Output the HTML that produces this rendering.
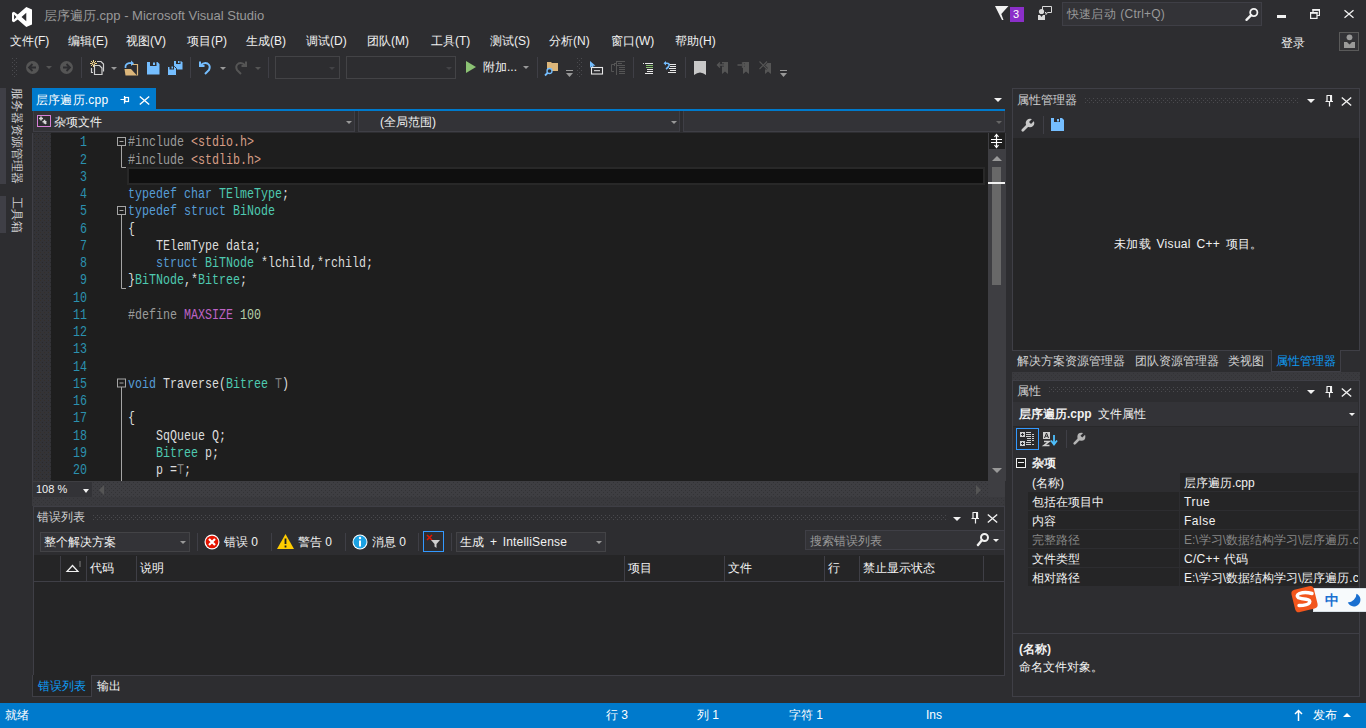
<!DOCTYPE html>
<html><head><meta charset="utf-8">
<style>
*{margin:0;padding:0;box-sizing:border-box}
html,body{width:1366px;height:728px;overflow:hidden;background:#2d2d30;font-family:"Liberation Sans",sans-serif;font-size:12px;color:#f1f1f1}
.a{position:absolute}
.t{position:absolute;white-space:nowrap;line-height:1}
svg{position:absolute;overflow:visible}
.dots{background-image:radial-gradient(circle,#46464c 0.7px,transparent 0.9px);background-size:4px 4px}
.code{position:absolute;left:128px;font-family:"Liberation Mono",monospace;font-size:14px;transform-origin:0 0;transform:scaleX(0.8333);white-space:pre;line-height:17.25px;color:#dcdcdc}
.ln{position:absolute;left:37px;width:50px;text-align:right;font-family:"Liberation Mono",monospace;font-size:14px;transform-origin:100% 0;transform:scaleX(0.8333);white-space:pre;line-height:17.25px;color:#2b91af}
.kw{color:#569cd6}.ty{color:#4ec9b0}.pp{color:#9b9b9b}.st{color:#d69d85}.mc{color:#bd63c5}.nu{color:#b5cea8}.gr{color:#7f7f7f}
.sep{position:absolute;width:1px;background:#3f3f46}
.arr{position:absolute;width:0;height:0;border-left:3px solid transparent;border-right:3px solid transparent;border-top:3px solid #999}
</style></head><body>
<svg style="left:0;top:0" width="0" height="0"><defs>
<pattern id="pd" width="4" height="4" patternUnits="userSpaceOnUse"><rect x="0" y="0" width="1" height="1" fill="#4a4a4e"/><rect x="2" y="2" width="1" height="1" fill="#4a4a4e"/></pattern>
<pattern id="pk" width="4" height="4" patternUnits="userSpaceOnUse"><rect x="1" y="1" width="1" height="1" fill="#29292b"/><rect x="3" y="3" width="1" height="1" fill="#352f2a"/></pattern>
<pattern id="ph" width="4" height="4" patternUnits="userSpaceOnUse"><rect x="1" y="1" width="1" height="1" fill="#333336"/><rect x="3" y="3" width="1" height="1" fill="#333336"/></pattern>
</defs></svg>
<!-- ===== TITLE BAR ===== -->
<svg style="left:12px;top:7px" width="20" height="20" viewBox="0 0 21 21"><path d="M15 0 L21 2.6 V18.4 L15 21 L6 13 L2 16 L0 15 V6 L2 5 L6 8 Z M15 6 L10 10.5 L15 15 Z M2.2 8 V13 L4.6 10.5 Z" fill="#fff" fill-rule="evenodd"/></svg>
<div class="t" style="left:44px;top:9px;font-size:13px;color:#999">层序遍历.cpp - Microsoft Visual Studio</div>

<svg style="left:995px;top:6px" width="14" height="15" viewBox="0 0 14 15"><path d="M0 0 H13.5 L6.3 8 L8.5 14 H7 Z" fill="#f1f1f1"/></svg>
<div class="a" style="left:1010px;top:7px;width:14px;height:15px;background:#8b2fc9"></div>
<div class="t" style="left:1013px;top:9px;font-size:11px;color:#fff">3</div>
<svg style="left:1037px;top:5px" width="16" height="16" viewBox="0 0 16 16"><path d="M5.5 6 V1.5 H14.5 V7.5 H10.5 L9 9.5 V7.5 H8" fill="none" stroke="#dadada" stroke-width="1"/><circle cx="4.5" cy="6.5" r="2.6" fill="#dadada"/><path d="M1 15 V10 H3 L4.5 12 L6 10 H8 V15 Z" fill="#dadada"/></svg>
<div class="a" style="left:1062px;top:2px;width:200px;height:24px;background:#333337;border:1px solid #3f3f46"></div>
<div class="t" style="left:1067px;top:8px;color:#999;letter-spacing:0.2px;word-spacing:1px">快速启动 (Ctrl+Q)</div>
<svg style="left:1245px;top:7px" width="14" height="14" viewBox="0 0 14 14"><circle cx="8.8" cy="5.5" r="3.6" fill="none" stroke="#f1f1f1" stroke-width="1.8"/><path d="M6.2 8.2 L1.5 12.8" stroke="#f1f1f1" stroke-width="2.4" stroke-linecap="round"/></svg>
<div class="a" style="left:1277px;top:15px;width:9px;height:3px;background:#f1f1f1"></div>
<svg style="left:1310px;top:9px" width="10" height="10" viewBox="0 0 10 10"><path d="M3 3 V0.6 H9.4 V6.5 H7" fill="none" stroke="#f1f1f1" stroke-width="1.2"/><rect x="0.6" y="3.6" width="6.4" height="5.8" fill="none" stroke="#f1f1f1" stroke-width="1.2"/><rect x="0" y="3" width="7.6" height="1.8" fill="#f1f1f1"/><rect x="2.4" y="0" width="7.6" height="1.8" fill="#f1f1f1"/></svg>
<svg style="left:1344px;top:10px" width="10" height="8" viewBox="0 0 10 8"><path d="M0.5 0.3 L9.5 7.7 M9.5 0.3 L0.5 7.7" stroke="#f1f1f1" stroke-width="1.3"/></svg>

<!-- ===== MENU ===== -->
<div class="t" style="left:10px;top:35px">文件(F)</div>
<div class="t" style="left:68px;top:35px">编辑(E)</div>
<div class="t" style="left:126px;top:35px">视图(V)</div>
<div class="t" style="left:187px;top:35px">项目(P)</div>
<div class="t" style="left:246px;top:35px">生成(B)</div>
<div class="t" style="left:306px;top:35px">调试(D)</div>
<div class="t" style="left:367px;top:35px">团队(M)</div>
<div class="t" style="left:431px;top:35px">工具(T)</div>
<div class="t" style="left:490px;top:35px">测试(S)</div>
<div class="t" style="left:549px;top:35px">分析(N)</div>
<div class="t" style="left:611px;top:35px">窗口(W)</div>
<div class="t" style="left:675px;top:35px">帮助(H)</div>
<div class="t" style="left:1281px;top:37px">登录</div>
<div class="a" style="left:1339px;top:32px;width:20px;height:19px;border:1px solid #5a5a5a;background:#333337"></div>
<svg style="left:1344px;top:34px" width="11" height="14" viewBox="0 0 11 14"><circle cx="5.5" cy="3.3" r="2.9" fill="#9a9a9a"/><path d="M0 14 V8 H3 L5.5 10.5 L8 8 H11 V14 Z" fill="#9a9a9a"/></svg>

<!-- ===== TOOLBAR ===== -->
<svg style="left:12px;top:58px" width="5" height="20"><rect width="5" height="20" fill="url(#pd)"/></svg>
<svg style="left:26px;top:61px" width="13" height="13" viewBox="0 0 13 13"><circle cx="6.5" cy="6.5" r="6.5" fill="#555"/><path d="M3 6.5 H10 M6.5 3 L3 6.5 L6.5 10" fill="none" stroke="#2d2d30" stroke-width="1.8"/></svg>
<div class="arr" style="left:46px;top:66px;border-top-color:#555"></div>
<svg style="left:60px;top:61px" width="13" height="13" viewBox="0 0 13 13"><circle cx="6.5" cy="6.5" r="6.5" fill="#555"/><path d="M3 6.5 H10 M6.5 3 L10 6.5 L6.5 10" fill="none" stroke="#2d2d30" stroke-width="1.8"/></svg>
<div class="sep" style="left:81px;top:57px;height:21px"></div>
<svg style="left:90px;top:60px" width="14" height="15" viewBox="0 0 14 15"><g stroke="#f5d78e" stroke-width="1"><path d="M3.5 0 V7 M0 3.5 H7 M1 1 L6 6 M6 1 L1 6"/></g><circle cx="3.5" cy="3.5" r="1" fill="#2d2d30"/><path d="M7 1.5 H11 L13.5 4 V11.5" fill="none" stroke="#d0d0d0" stroke-width="1.2"/><path d="M1.5 8 V12.5 H3" fill="none" stroke="#d0d0d0" stroke-width="1.2"/><path d="M4.5 5.5 H9.5 L12 8 V14.5 H4.5 Z" fill="#2d2d30" stroke="#d0d0d0" stroke-width="1.2"/></svg>
<div class="arr" style="left:111px;top:67px;border-top-color:#999"></div>
<svg style="left:124px;top:60px" width="15" height="16" viewBox="0 0 15 16"><path d="M7 4.5 H13.5 V15.5" fill="none" stroke="#dcb67a" stroke-width="1.2"/><path d="M0.5 9 H7 L13 15.5 H1.5 Z" fill="#dcb67a"/><path d="M1.5 8 Q1 4 5 3.2 H8" fill="none" stroke="#75beff" stroke-width="1.7"/><path d="M7 0.5 L10 3.2 L7 6 Z" fill="#75beff"/></svg>
<svg style="left:147px;top:62px" width="13" height="13" viewBox="0 0 13 13"><path d="M0 0 H10.5 L12.5 2 V12.5 H0 Z" fill="#75beff"/><rect x="3" y="0" width="6.5" height="4" fill="#2d2d30"/><rect x="6" y="0.5" width="2" height="2.5" fill="#75beff"/></svg>
<svg style="left:167px;top:60px" width="16" height="16" viewBox="0 0 16 16"><path d="M7 1 H14 L15.5 2.5 V9.5 H7 Z" fill="#75beff"/><rect x="9" y="1" width="4.5" height="3" fill="#2d2d30"/><rect x="11" y="1" width="1.5" height="2" fill="#75beff"/><path d="M0.5 6.5 H7.5 L9.5 8.5 V15.5 H0.5 Z" fill="#75beff" stroke="#2d2d30" stroke-width="1"/><rect x="2.5" y="6.5" width="4.5" height="3" fill="#2d2d30"/><rect x="4.5" y="6.5" width="1.5" height="2" fill="#75beff"/></svg>
<div class="sep" style="left:190px;top:57px;height:21px"></div>
<svg style="left:198px;top:60px" width="14" height="15" viewBox="0 0 14 15"><path d="M2 1.5 V6 H6.5" fill="none" stroke="#75beff" stroke-width="2"/><path d="M2.5 5.5 Q6 2 9.5 3.5 Q13 5.5 11 10 L7 14" fill="none" stroke="#75beff" stroke-width="2"/></svg>
<div class="arr" style="left:220px;top:67px;border-top-color:#999"></div>
<svg style="left:234px;top:60px" width="14" height="15" viewBox="0 0 14 15"><path d="M12 1.5 V6 H7.5" fill="none" stroke="#555" stroke-width="2"/><path d="M11.5 5.5 Q8 2 4.5 3.5 Q1 5.5 3 10 L7 14" fill="none" stroke="#555" stroke-width="2"/></svg>
<div class="arr" style="left:255px;top:67px;border-top-color:#555"></div>
<div class="sep" style="left:268px;top:57px;height:21px"></div>
<div class="a" style="left:275px;top:56px;width:65px;height:23px;border:1px solid #434346"></div>
<div class="arr" style="left:329px;top:67px;border-top-color:#434346"></div>
<div class="a" style="left:346px;top:56px;width:110px;height:23px;border:1px solid #434346"></div>
<div class="arr" style="left:446px;top:67px;border-top-color:#434346"></div>
<svg style="left:466px;top:61px" width="10" height="12" viewBox="0 0 10 12"><path d="M0 0 L10 6 L0 12 Z" fill="#8cc274"/></svg>
<div class="t" style="left:483px;top:61px">附加...</div>
<div class="arr" style="left:523px;top:66px;border-top-color:#999"></div>
<div class="sep" style="left:537px;top:57px;height:21px"></div>
<svg style="left:544px;top:60px" width="15" height="16" viewBox="0 0 15 16"><path d="M3 2 H7 L8 3 H14 V11 H3 Z" fill="#dcb67a"/><circle cx="5.5" cy="11" r="2.5" fill="#2d2d30" stroke="#75beff" stroke-width="1.3"/><path d="M4 12.5 L1 15.5" stroke="#75beff" stroke-width="1.8"/></svg>
<svg style="left:566px;top:70px" width="7" height="7" viewBox="0 0 7 7"><rect x="0" y="0" width="7" height="1" fill="#999"/><path d="M0 3 H7 L3.5 7 Z" fill="#999"/></svg>
<svg style="left:577px;top:58px" width="5" height="20"><rect width="5" height="20" fill="url(#pd)"/></svg>
<svg style="left:590px;top:61px" width="14" height="14" viewBox="0 0 14 14"><path d="M0 0 V7 L1.8 5.3 L3.2 8 L4.2 7.5 L3 4.8 L5.5 4.8 Z" fill="#75beff"/><rect x="1.5" y="6.5" width="11" height="6.5" fill="#2d2d30" stroke="#e8e8e8" stroke-width="1.1"/><path d="M4 9.7 H10" stroke="#e8e8e8" stroke-width="1"/></svg>
<svg style="left:611px;top:61px" width="15" height="15" viewBox="0 0 15 15"><g stroke="#555" stroke-width="1" fill="none"><path d="M5.5 0 V14 M6 0.5 H14 M7 2.5 H11 M6 4.5 H14 M8 6.5 H14 M8 8.5 H14 M8 10.5 H14 M8 12.5 H14 M3.5 2.5 H5 M3.5 2 V5"/><path d="M3 3.5 H0.5 V10.5 H3"/></g></svg>
<div class="sep" style="left:633px;top:57px;height:21px"></div>
<svg style="left:643px;top:62px" width="11" height="12" viewBox="0 0 11 12"><path d="M0 1.5 H1 M2 1.5 H10 M4 9.5 H10 M2 11.5 H10" stroke="#e8e8e8" stroke-width="1"/><path d="M3 3.5 H10 M3 5.5 H10" stroke="#8cc274" stroke-width="1"/><path d="M4 7.5 H10" stroke="#e8e8e8" stroke-width="1"/></svg>
<svg style="left:663px;top:61px" width="14" height="14" viewBox="0 0 14 14"><path d="M6 3.5 H13 M7 5.5 H13 M6 7.5 H13 M7 9.5 H13 M5 11.5 H13" stroke="#e8e8e8" stroke-width="1"/><path d="M2 2.2 H4 Q6.5 2.2 6 4.5 Q5.5 6.5 3 8" fill="none" stroke="#75beff" stroke-width="1.6"/><path d="M0.5 2.2 L3 0 V4.5 Z" fill="#75beff"/></svg>
<div class="sep" style="left:685px;top:57px;height:21px"></div>
<svg style="left:694px;top:61px" width="12" height="14" viewBox="0 0 12 14"><path d="M0 0 H12 V14 Q6 9 0 14 Z" fill="#c8c8c8"/></svg>
<svg style="left:716px;top:61px" width="13" height="13" viewBox="0 0 13 13"><path d="M6 1 H12 V13 L9 10.5 L6 13 Z" fill="#555"/><path d="M1.5 4 H8" stroke="#2d2d30" stroke-width="3"/><path d="M2 4 H8 M4 1.5 L1.5 4 L4 6.5" fill="none" stroke="#555" stroke-width="1.4"/></svg>
<svg style="left:737px;top:61px" width="13" height="13" viewBox="0 0 13 13"><path d="M6 1 H12 V13 L9 10.5 L6 13 Z" fill="#555"/><path d="M0 4 H8" stroke="#2d2d30" stroke-width="3"/><path d="M0.5 4 H7 M5 1.5 L7.5 4 L5 6.5" fill="none" stroke="#555" stroke-width="1.4"/></svg>
<svg style="left:759px;top:61px" width="13" height="13" viewBox="0 0 13 13"><path d="M6 2 H12 V13 L9 10.5 L6 13 Z" fill="#555"/><path d="M0.5 0.5 L8 8 M8 0.5 L0.5 8" fill="none" stroke="#2d2d30" stroke-width="2.6"/><path d="M0.5 0.5 L8 8 M8 0.5 L0.5 8" fill="none" stroke="#555" stroke-width="1.1"/></svg>
<svg style="left:780px;top:70px" width="7" height="7" viewBox="0 0 7 7"><rect x="0" y="0" width="7" height="1" fill="#999"/><path d="M0 3 H7 L3.5 7 Z" fill="#999"/></svg>
<!-- ===== LEFT VERTICAL TABS ===== -->
<div class="a" style="left:0;top:88px;width:6px;height:96px;background:#3f3f46"></div>
<div class="a" style="left:0;top:196px;width:6px;height:37px;background:#3f3f46"></div>
<div class="t" style="left:23px;top:88px;transform-origin:0 0;transform:rotate(90deg);color:#d0d0d0;letter-spacing:0">服务器资源管理器</div>
<div class="t" style="left:23px;top:197px;transform-origin:0 0;transform:rotate(90deg);color:#d0d0d0">工具箱</div>

<!-- ===== DOC TAB ===== -->
<div class="a" style="left:32px;top:88px;width:124px;height:21px;background:#007acc"></div>
<div class="t" style="left:36px;top:94px;color:#fff;letter-spacing:0.2px">层序遍历.cpp</div>
<svg style="left:120px;top:96px" width="10" height="8" viewBox="0 0 10 8"><path d="M0.5 3.5 H4 M4.5 0 V7.5" stroke="#fff" stroke-width="1.2"/><rect x="5" y="1.5" width="3.5" height="4" fill="none" stroke="#fff" stroke-width="1.2"/></svg>
<svg style="left:139px;top:96px" width="11" height="9" viewBox="0 0 11 9"><path d="M0.8 0.5 L10.2 8.5 M10.2 0.5 L0.8 8.5" stroke="#fff" stroke-width="1.4"/></svg>
<div class="a" style="left:32px;top:109px;width:973px;height:2px;background:#007acc"></div>
<div class="arr" style="left:994px;top:98px;border-left-width:4px;border-right-width:4px;border-top:4px solid #f1f1f1"></div>

<!-- ===== NAV BAR ===== -->
<div class="a" style="left:33px;top:111px;width:972px;height:22px;background:#2d2d30"></div>
<div class="a" style="left:33px;top:111px;width:322px;height:21px;background:#333337;border:1px solid #3f3f46;border-top:0"></div>
<svg style="left:37px;top:115px" width="14" height="12" viewBox="0 0 14 12"><rect x="0.5" y="0.5" width="13" height="11" fill="#2d2d30" stroke="#d67fd6" stroke-width="1"/><path d="M2 3.5 H6 M4 1.5 V5.5 M5.5 6.8 H9.5 M7.5 4.8 V8.8 M7 5.5 L9 9" stroke="#d8d8d8" stroke-width="1.6"/></svg>
<div class="t" style="left:54px;top:116px;color:#f1f1f1">杂项文件</div>
<div class="arr" style="left:346px;top:121px;border-top-color:#999"></div>
<div class="a" style="left:358px;top:111px;width:322px;height:21px;background:#333337;border:1px solid #3f3f46;border-top:0"></div>
<div class="t" style="left:380px;top:116px;color:#f1f1f1">(全局范围)</div>
<div class="arr" style="left:671px;top:121px;border-top-color:#999"></div>
<div class="a" style="left:683px;top:111px;width:322px;height:21px;background:#333337;border:1px solid #3f3f46;border-top:0"></div>
<div class="arr" style="left:996px;top:121px;border-top-color:#666"></div>

<!-- ===== EDITOR ===== -->
<div class="a" style="left:33px;top:133px;width:955px;height:348px;background:#1e1e1e"></div>
<div class="a" style="left:32px;top:133px;width:19px;height:348px;background:#333337;border-left:1px solid #3f3f46"></div><svg style="left:33px;top:133px" width="18" height="348"><rect width="18" height="348" fill="url(#pk)"/></svg>
<!-- current line -->
<div class="a" style="left:127px;top:167px;width:858px;height:18px;border:2px solid #282828;background:#0f0f0f"></div>
<!-- outlining -->
<svg style="left:116px;top:132px" width="12" height="349" viewBox="0 0 12 349">
<g fill="none" stroke="#a5a5a5" stroke-width="1">
<rect x="1.5" y="5.5" width="8" height="8"/><path d="M3.5 9.5 H7.5"/>
<path d="M5.5 13.5 V35.5 H10"/>
<rect x="1.5" y="74.5" width="8" height="8"/><path d="M3.5 78.5 H7.5"/>
<path d="M5.5 82.5 V156.5 H10"/>
<rect x="1.5" y="247" width="8" height="8"/><path d="M3.5 251 H7.5"/>
<path d="M5.5 255 V349"/>
</g></svg>
<div class="ln" style="top:134.4px">1
2
3
4
5
6
7
8
9
10
11
12
13
14
15
16
17
18
19
20</div>
<div class="code" style="top:134.4px"><span class="pp">#include </span><span class="st">&lt;stdio.h&gt;</span>
<span class="pp">#include </span><span class="st">&lt;stdlib.h&gt;</span>

<span class="kw">typedef</span> <span class="kw">char</span> <span class="ty">TElmeType</span>;
<span class="kw">typedef</span> <span class="kw">struct</span> <span class="ty">BiNode</span>
{
    TElemType data;
    <span class="kw">struct</span> <span class="ty">BiTNode</span> *lchild,*rchild;
}<span class="ty">BiTNode</span>,*<span class="ty">Bitree</span>;

<span class="pp">#define </span><span class="mc">MAXSIZE</span> <span class="nu">100</span>



<span class="kw">void</span> Traverse(<span class="ty">Bitree</span> <span class="gr">T</span>)

{
    SqQueue Q;
    <span class="ty">Bitree</span> p;
    p =<span class="gr">T</span>;</div>

<!-- vscroll -->
<div class="a" style="left:988px;top:133px;width:18px;height:348px;background:#3e3e42"></div>
<div class="a" style="left:989px;top:133px;width:16px;height:16px;background:#1e1e1e"></div>
<svg style="left:990px;top:134px" width="13" height="14" viewBox="0 0 13 14"><path d="M1 5.5 H12 M1 8.5 H12 M6.5 1 V13" stroke="#fff" stroke-width="1.2"/><path d="M4.5 3 L6.5 0.5 L8.5 3 M4.5 11 L6.5 13.5 L8.5 11" fill="none" stroke="#fff" stroke-width="1.2"/></svg>
<div class="arr" style="left:992px;top:156px;border-left:5px solid transparent;border-right:5px solid transparent;border-top:0;border-bottom:5px solid #999"></div>
<div class="a" style="left:992px;top:167px;width:9px;height:118px;background:#686868"></div>
<div class="a" style="left:988px;top:182px;width:17px;height:2px;background:#f1f1f1"></div>
<div class="arr" style="left:992px;top:468px;border-left:5px solid transparent;border-right:5px solid transparent;border-top:5px solid #999"></div>

<!-- hscroll / zoom -->
<div class="a" style="left:32px;top:481px;width:956px;height:16px;background:#3e3e42"></div><svg style="left:92px;top:481px" width="896" height="16"><rect width="896" height="16" fill="url(#ph)"/></svg>
<div class="a" style="left:988px;top:481px;width:17px;height:16px;background:#3e3e42"></div>
<div class="a" style="left:33px;top:482px;width:59px;height:15px;background:#333337"></div>
<div class="t" style="left:36px;top:484px;font-size:11px;color:#f1f1f1">108 %</div>
<div class="arr" style="left:83px;top:489px;border-left-width:3.5px;border-right-width:3.5px;border-top:4px solid #f1f1f1"></div>
<svg style="left:99px;top:485px" width="5" height="10" viewBox="0 0 5 10"><path d="M5 0 V10 L0 5 Z" fill="#555"/></svg>
<svg style="left:976px;top:485px" width="5" height="10" viewBox="0 0 5 10"><path d="M0 0 V10 L5 5 Z" fill="#555"/></svg>
<div class="a" style="left:32px;top:497px;width:973px;height:9px;background:#3a3a3e"></div><svg style="left:32px;top:497px" width="973" height="9"><rect width="973" height="9" fill="url(#ph)"/></svg>
<!-- ===== ERROR LIST ===== -->
<div class="a" style="left:33px;top:506px;width:972px;height:191px;background:#2d2d30;border:1px solid #3f3f46"></div>
<div class="t" style="left:37px;top:511px;color:#d0d0d0">错误列表</div>
<svg style="left:93px;top:515px" width="854" height="5"><rect width="854" height="5" fill="url(#pd)"/></svg>
<div class="arr" style="left:953px;top:517px;border-left-width:4px;border-right-width:4px;border-top:4px solid #f1f1f1"></div>
<svg style="left:971px;top:512px" width="9" height="12" viewBox="0 0 9 12"><path d="M1.5 0.5 H7 M2 0.5 V6.5 M6.5 0.5 V6.5 M0.5 6.5 H8 M4.5 6.5 V11.5" fill="none" stroke="#f1f1f1" stroke-width="1.2"/><rect x="5" y="0" width="2" height="6.5" fill="#f1f1f1"/></svg>
<svg style="left:987px;top:514px" width="11" height="9" viewBox="0 0 11 9"><path d="M0.8 0.5 L10.2 8.5 M10.2 0.5 L0.8 8.5" stroke="#f1f1f1" stroke-width="1.4"/></svg>
<!-- toolbar -->
<div class="a" style="left:40px;top:532px;width:150px;height:20px;background:#333337;border:1px solid #434346"></div>
<div class="t" style="left:44px;top:536px">整个解决方案</div>
<div class="arr" style="left:180px;top:541px;border-top-color:#999"></div>
<div class="sep" style="left:197px;top:533px;height:18px"></div>
<svg style="left:204px;top:534px" width="16" height="16" viewBox="0 0 16 16"><circle cx="8" cy="8" r="7.5" fill="#fff"/><circle cx="8" cy="8" r="6.3" fill="#e51400"/><path d="M5 5 L11 11 M11 5 L5 11" stroke="#fff" stroke-width="2.2"/></svg>
<div class="t" style="left:224px;top:536px">错误 0</div>
<div class="sep" style="left:271px;top:533px;height:18px"></div>
<svg style="left:277px;top:534px" width="17" height="15" viewBox="0 0 17 15"><path d="M8.5 0 L17 15 H0 Z" fill="#ffcc00"/><path d="M8.5 4.5 V10 M8.5 11.5 V13.5" stroke="#1e1e1e" stroke-width="1.8"/></svg>
<div class="t" style="left:298px;top:536px">警告 0</div>
<div class="sep" style="left:345px;top:533px;height:18px"></div>
<svg style="left:352px;top:534px" width="16" height="16" viewBox="0 0 16 16"><circle cx="8" cy="8" r="7.5" fill="#fff"/><circle cx="8" cy="8" r="6.5" fill="#1ba1e2"/><path d="M8 6.5 V12.5" stroke="#fff" stroke-width="2"/><circle cx="8" cy="4" r="1.2" fill="#fff"/></svg>
<div class="t" style="left:372px;top:536px">消息 0</div>
<div class="sep" style="left:418px;top:533px;height:18px"></div>
<div class="a" style="left:423px;top:531px;width:21px;height:21px;border:1px solid #3399ff"></div>
<svg style="left:426px;top:534px" width="15" height="15" viewBox="0 0 15 15"><path d="M1 1 L6 6 M6 1 L1 6" stroke="#e51400" stroke-width="1.5"/><path d="M5 6 H14 L10.5 10 V14 L8.5 12.5 V10 Z" fill="#d0d0d0"/></svg>
<div class="sep" style="left:451px;top:533px;height:18px"></div>
<div class="a" style="left:456px;top:532px;width:150px;height:20px;background:#333337;border:1px solid #434346"></div>
<div class="t" style="left:460px;top:536px;word-spacing:2px;letter-spacing:0.2px">生成 + IntelliSense</div>
<div class="arr" style="left:596px;top:541px;border-top-color:#999"></div>
<div class="a" style="left:805px;top:530px;width:200px;height:20px;background:#333337;border:1px solid #3f3f46"></div>
<div class="t" style="left:810px;top:535px;color:#999">搜索错误列表</div>
<svg style="left:977px;top:533px" width="12" height="13" viewBox="0 0 12 13"><circle cx="7.5" cy="4.5" r="3.5" fill="none" stroke="#f1f1f1" stroke-width="2"/><path d="M5 7 L1 12" stroke="#f1f1f1" stroke-width="2.4" stroke-linecap="round"/></svg>
<div class="arr" style="left:993px;top:539px;border-top-color:#f1f1f1"></div>
<!-- table -->
<div class="a" style="left:34px;top:555px;width:970px;height:141px;background:#252526"></div>
<div class="a" style="left:34px;top:581px;width:970px;height:1px;background:#3f3f46"></div>
<div class="sep" style="left:60px;top:556px;height:25px"></div>
<div class="sep" style="left:86px;top:556px;height:25px"></div>
<div class="sep" style="left:136px;top:556px;height:25px"></div>
<div class="sep" style="left:624px;top:556px;height:25px"></div>
<div class="sep" style="left:724px;top:556px;height:25px"></div>
<div class="sep" style="left:824px;top:556px;height:25px"></div>
<div class="sep" style="left:859px;top:556px;height:25px"></div>
<div class="sep" style="left:983px;top:556px;height:25px"></div>
<svg style="left:66px;top:561px" width="16" height="12" viewBox="0 0 16 12"><path d="M1 10.5 L6.5 4.5 L12 10.5 Z" fill="none" stroke="#f1f1f1" stroke-width="1.2"/><path d="M13 1 H15 M13 3 H15 M13 5 H15" stroke="#999" stroke-width="0.8"/></svg>
<div class="t" style="left:90px;top:562px">代码</div>
<div class="t" style="left:140px;top:562px">说明</div>
<div class="t" style="left:628px;top:562px">项目</div>
<div class="t" style="left:728px;top:562px">文件</div>
<div class="t" style="left:828px;top:562px">行</div>
<div class="t" style="left:863px;top:562px">禁止显示状态</div>
<!-- bottom tabs -->
<div class="a" style="left:33px;top:676px;width:972px;height:21px;background:#2d2d30"></div>
<div class="a" style="left:92px;top:675px;width:913px;height:1px;background:#3f3f46"></div>
<div class="a" style="left:32px;top:675px;width:60px;height:22px;background:#252526;border:1px solid #3f3f46;border-top:0"></div>
<div class="t" style="left:38px;top:680px;color:#0e9cf5">错误列表</div>
<div class="t" style="left:97px;top:680px;color:#f1f1f1">输出</div>

<!-- ===== RIGHT: PROPERTY MANAGER ===== -->
<div class="a" style="left:1012px;top:88px;width:348px;height:263px;background:#2d2d30;border:1px solid #3f3f46"></div>
<div class="t" style="left:1017px;top:94px;color:#d0d0d0">属性管理器</div>
<svg style="left:1085px;top:98px" width="213" height="5"><rect width="213" height="5" fill="url(#pd)"/></svg>
<div class="arr" style="left:1307px;top:99px;border-left-width:4px;border-right-width:4px;border-top:4px solid #f1f1f1"></div>
<svg style="left:1325px;top:95px" width="9" height="12" viewBox="0 0 9 12"><path d="M1.5 0.5 H7 M2 0.5 V6.5 M6.5 0.5 V6.5 M0.5 6.5 H8 M4.5 6.5 V11.5" fill="none" stroke="#f1f1f1" stroke-width="1.2"/><rect x="5" y="0" width="2" height="6.5" fill="#f1f1f1"/></svg>
<svg style="left:1341px;top:97px" width="11" height="9" viewBox="0 0 11 9"><path d="M0.8 0.5 L10.2 8.5 M10.2 0.5 L0.8 8.5" stroke="#f1f1f1" stroke-width="1.4"/></svg>
<svg style="left:1021px;top:118px" width="14" height="14" viewBox="0 0 14 14"><path d="M1.8 12.2 L7.5 6.5" stroke="#c8c8c8" stroke-width="2.8" stroke-linecap="round"/><circle cx="9" cy="5" r="4.3" fill="#c8c8c8"/><path d="M9 5 L14 0" stroke="#2d2d30" stroke-width="2.8"/></svg>
<div class="sep" style="left:1043px;top:116px;height:18px"></div>
<svg style="left:1051px;top:118px" width="13" height="13" viewBox="0 0 13 13"><path d="M0 0 H11 L13 2 V13 H0 Z" fill="#75beff"/><rect x="3" y="0" width="6" height="4" fill="#2d2d30"/><rect x="6" y="1" width="2" height="2.5" fill="#75beff"/></svg>
<div class="a" style="left:1013px;top:138px;width:346px;height:212px;background:#252526"></div>
<div class="t" style="left:1114px;top:238px;word-spacing:2px;letter-spacing:0.3px">未加载 Visual C++ 项目。</div>
<!-- tabs -->
<div class="t" style="left:1017px;top:355px;color:#d0d0d0">解决方案资源管理器</div>
<div class="t" style="left:1135px;top:355px;color:#d0d0d0">团队资源管理器</div>
<div class="t" style="left:1228px;top:355px;color:#d0d0d0">类视图</div>
<div class="a" style="left:1271px;top:350px;width:70px;height:22px;background:#252526;border:1px solid #3f3f46;border-top:0"></div>
<div class="t" style="left:1276px;top:355px;color:#0e9cf5">属性管理器</div>
<div class="a" style="left:1012px;top:372px;width:348px;height:8px;background:#3a3a3e"></div><svg style="left:1012px;top:372px" width="348" height="8"><rect width="348" height="8" fill="url(#ph)"/></svg>

<!-- ===== RIGHT: PROPERTIES ===== -->
<div class="a" style="left:1012px;top:380px;width:348px;height:317px;background:#2d2d30;border:1px solid #3f3f46"></div>
<div class="t" style="left:1017px;top:385px;color:#d0d0d0">属性</div>
<svg style="left:1049px;top:387px" width="249" height="5"><rect width="249" height="5" fill="url(#pd)"/></svg>
<div class="arr" style="left:1307px;top:390px;border-left-width:4px;border-right-width:4px;border-top:4px solid #f1f1f1"></div>
<svg style="left:1325px;top:386px" width="9" height="12" viewBox="0 0 9 12"><path d="M1.5 0.5 H7 M2 0.5 V6.5 M6.5 0.5 V6.5 M0.5 6.5 H8 M4.5 6.5 V11.5" fill="none" stroke="#f1f1f1" stroke-width="1.2"/><rect x="5" y="0" width="2" height="6.5" fill="#f1f1f1"/></svg>
<svg style="left:1341px;top:388px" width="11" height="9" viewBox="0 0 11 9"><path d="M0.8 0.5 L10.2 8.5 M10.2 0.5 L0.8 8.5" stroke="#f1f1f1" stroke-width="1.4"/></svg>
<div class="a" style="left:1013px;top:402px;width:345px;height:25px;background:#333337;border-bottom:1px solid #28282a"></div>
<div class="t" style="left:1019px;top:408px;font-weight:bold">层序遍历.cpp</div>
<div class="t" style="left:1098px;top:408px">文件属性</div>
<div class="arr" style="left:1349px;top:413px;border-top-color:#f1f1f1"></div>
<div class="a" style="left:1016px;top:428px;width:23px;height:22px;border:1px solid #3399ff;background:#2a2a2c"></div>
<svg style="left:1019px;top:431px" width="16" height="16" viewBox="0 0 16 16"><rect x="1" y="1" width="5" height="5" fill="#d0d0d0"/><path d="M3.5 2 V5 M2 3.5 H5" stroke="#2d2d30" stroke-width="1"/><rect x="1" y="10" width="5" height="5" fill="#d0d0d0"/><path d="M3.5 11 V14 M2 12.5 H5" stroke="#2d2d30" stroke-width="1"/><path d="M7 1.5 H12 M7 3.5 H12 M7 5.5 H12 M8 7.5 H12 M8 9.5 H12 M7 11.5 H12 M7 13.5 H12 M13 3.5 H15 M13 5.5 H15 M13 7.5 H15 M13 9.5 H15 M13 13.5 H15" stroke="#d0d0d0" stroke-width="1"/></svg>
<svg style="left:1042px;top:431px" width="16" height="16" viewBox="0 0 16 16"><rect x="1" y="1" width="7" height="7" fill="#d0d0d0"/><path d="M2.5 7 L4.5 2 L6.5 7 M3.3 5.2 H5.7" fill="none" stroke="#2d2d30" stroke-width="1"/><path d="M2 10.5 H7 L2 14.5 H7.5" fill="none" stroke="#d0d0d0" stroke-width="1.6"/><path d="M12 4 V13" stroke="#4fc1ff" stroke-width="1.8"/><path d="M9 9.5 L12 13.5 L15 9.5" fill="none" stroke="#4fc1ff" stroke-width="1.8"/></svg>
<div class="sep" style="left:1066px;top:430px;height:18px"></div>
<svg style="left:1073px;top:432px" width="13" height="13" viewBox="0 0 14 14"><path d="M1.8 12.2 L7.5 6.5" stroke="#b4b4b4" stroke-width="2.8" stroke-linecap="round"/><circle cx="9" cy="5" r="4.3" fill="#b4b4b4"/><path d="M9 5 L14 0" stroke="#2d2d30" stroke-width="2.8"/></svg>
<!-- grid -->
<svg style="left:1016px;top:458px" width="10" height="10" viewBox="0 0 10 10"><rect x="0.5" y="0.5" width="9" height="9" fill="#1e1e1e" stroke="#f1f1f1"/><path d="M2 4.5 H8" stroke="#f1f1f1"/></svg>
<div class="t" style="left:1032px;top:457px;font-weight:bold">杂项</div>
<div class="a" style="left:1028px;top:492px;width:330px;height:95px;background:repeating-linear-gradient(#252526 0,#252526 18px,#2d2d30 18px,#2d2d30 19px)"></div>
<div class="a" style="left:1180px;top:473px;width:178px;height:18px;background:#252526"></div>
<div class="a" style="left:1179px;top:473px;width:1px;height:114px;background:#2d2d30"></div>
<div class="t" style="left:1032px;top:477px">(名称)</div>
<div class="t" style="left:1032px;top:496px">包括在项目中</div>
<div class="t" style="left:1032px;top:515px">内容</div>
<div class="t" style="left:1032px;top:534px;color:#858585">完整路径</div>
<div class="t" style="left:1032px;top:553px">文件类型</div>
<div class="t" style="left:1032px;top:572px">相对路径</div>
<div class="t" style="left:1184px;top:477px">层序遍历.cpp</div>
<div class="t" style="left:1184px;top:496px;letter-spacing:0.5px">True</div>
<div class="t" style="left:1184px;top:515px;letter-spacing:0.5px">False</div>
<div class="a" style="left:1184px;top:530px;width:174px;height:57px;overflow:hidden">
<div class="t" style="left:0;top:4px;color:#858585">E:\学习\数据结构学习\层序遍历.cpp</div>
<div class="t" style="left:0;top:23px;letter-spacing:0.3px">C/C++ 代码</div>
<div class="t" style="left:0;top:42px">E:\学习\数据结构学习\层序遍历.cpp</div>
</div>
<!-- description -->
<div class="a" style="left:1013px;top:633px;width:346px;height:1px;background:#3f3f46"></div>
<div class="t" style="left:1019px;top:643px;font-weight:bold">(名称)</div>
<div class="t" style="left:1019px;top:661px">命名文件对象。</div>

<!-- sogou -->
<div class="a" style="left:1313px;top:588px;width:53px;height:24px;background:#f7fafc;border:1px solid #d8e0e6;border-right:0"></div>
<svg style="left:1289px;top:583px" width="32" height="32" viewBox="0 0 32 32"><g transform="rotate(-14 16 16)"><rect x="4" y="4.5" width="23" height="23" rx="4" fill="#f2561d"/></g><path d="M23 10.5 Q16 8.5 10.5 10.5 Q6.5 12.5 9.5 14.8 Q12 16 17 16.3 Q22 17 20.5 19.8 Q18.5 22.5 10 22.5" stroke="#fff" stroke-width="3.4" fill="none" stroke-linecap="round"/></svg>
<div class="t" style="left:1325px;top:593px;color:#1a6fd0;font-size:14px;font-weight:bold">中</div>
<svg style="left:1347px;top:593px" width="14" height="14" viewBox="0 0 14 14"><path d="M9.5 0.8 A6.6 6.6 0 1 1 0.8 9.5 A9 9 0 0 0 9.5 0.8 Z" fill="#1a6fd0"/></svg>

<!-- ===== STATUS BAR ===== -->
<div class="a" style="left:0;top:703px;width:1366px;height:25px;background:#007acc"></div>
<div class="t" style="left:5px;top:709px;color:#fff">就绪</div>
<div class="t" style="left:606px;top:709px;color:#fff">行 3</div>
<div class="t" style="left:697px;top:709px;color:#fff">列 1</div>
<div class="t" style="left:789px;top:709px;color:#fff">字符 1</div>
<div class="t" style="left:926px;top:709px;color:#fff">Ins</div>
<svg style="left:1294px;top:709px" width="9" height="12" viewBox="0 0 9 12"><path d="M4.5 12 V1.5 M1 5 L4.5 1.5 L8 5" fill="none" stroke="#fff" stroke-width="1.5"/></svg>
<div class="t" style="left:1313px;top:709px;color:#fff">发布</div>
<div class="arr" style="left:1343px;top:713px;border-top:0;border-bottom:4px solid #fff;border-left-width:4px;border-right-width:4px"></div>
</body></html>
